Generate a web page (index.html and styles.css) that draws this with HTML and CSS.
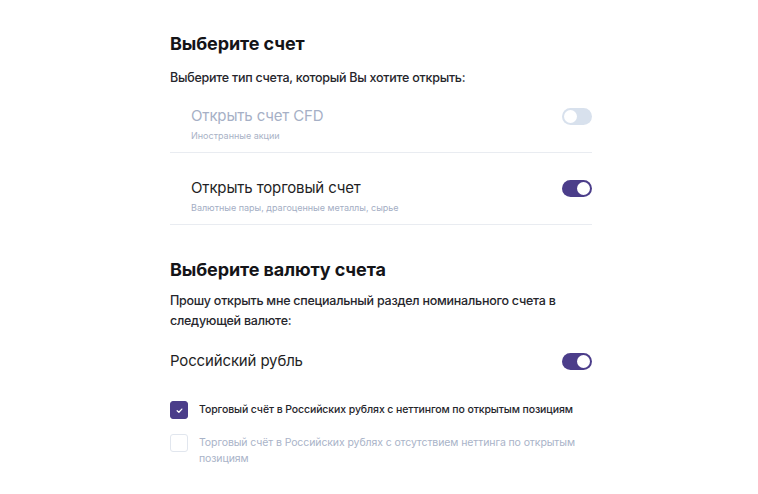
FILE: index.html
```html
<!DOCTYPE html>
<html lang="ru">
<head>
<meta charset="utf-8">
<title>Выберите счет</title>
<link rel="stylesheet" href="styles.css">
</head>
<body>
<main class="form">
  <section class="block">
    <h2 class="title">Выберите счет</h2>
    <p class="lead">Выберите тип счета, который Вы хотите открыть:</p>
    <div class="options">
      <div class="option is-off">
        <div class="option-head">
          <span class="option-name">Открыть счет CFD</span>
          <span class="toggle"><span class="knob"></span></span>
        </div>
        <div class="option-sub">Иностранные акции</div>
      </div>
      <div class="option">
        <div class="option-head">
          <span class="option-name">Открыть торговый счет</span>
          <span class="toggle on"><span class="knob"></span></span>
        </div>
        <div class="option-sub">Валютные пары, драгоценные металлы, сырье</div>
      </div>
    </div>
  </section>

  <section class="block second">
    <h2 class="title">Выберите валюту счета</h2>
    <p class="lead para">Прошу открыть мне специальный раздел номинального счета в следующей валюте:</p>
    <div class="currency">
      <span class="currency-name">Российский рубль</span>
      <span class="toggle on"><span class="knob"></span></span>
    </div>
    <div class="checks">
      <label class="check">
        <span class="box checked">
          <svg viewBox="0 0 10 10" width="9" height="9"><path d="M2.4 5.2 L4.3 6.9 L7.6 3.4" fill="none" stroke="#fff" stroke-width="1.4" stroke-linecap="round" stroke-linejoin="round"/></svg>
        </span>
        <span class="check-text">Торговый счёт в Российских рублях с неттингом по открытым позициям</span>
      </label>
      <label class="check muted">
        <span class="box"></span>
        <span class="check-text">Торговый счёт в Российских рублях с отсутствием неттинга по открытым позициям</span>
      </label>
    </div>
  </section>
</main>
</body>
</html>
```

FILE: styles.css
```css
* { box-sizing: border-box; }
html, body { margin: 0; padding: 0; background: #fff; }
body {
  font-family: Inter, "Noto Sans", "DejaVu Sans", sans-serif;
  color: #1c1c22;
  -webkit-font-smoothing: antialiased;
}
.form {
  width: 422px;
  margin-left: 170px;
  padding-top: 32px;
}
.title {
  margin: 0;
  font-size: 18px;
  line-height: 24px;
  font-weight: 700;
  color: #141418;
  letter-spacing: -0.1px;
}
.lead {
  margin: 12px 0 0;
  font-size: 12.5px;
  line-height: 20px;
  font-weight: 500;
  letter-spacing: -0.25px;
  color: #26262c;
}
.options { display: flex; flex-direction: column; }
.option {
  padding: 25px 0 9px 21px;
  border-bottom: 1px solid #e9ecf1;
}
.option:first-child { padding-top: 18px; }
.option-head {
  display: flex;
  align-items: center;
  justify-content: space-between;
  height: 20px;
}
.option-name {
  font-size: 15px;
  line-height: 20px;
  font-weight: 400;
  letter-spacing: -0.15px;
  color: #1f1f25;
}
.option-sub {
  margin-top: 3px;
  font-size: 9px;
  line-height: 14px;
  color: #a4aec4;
}
.is-off .option-name { color: #a6b0c6; }
.is-off .option-sub { color: #a9b2c6; }

.toggle {
  position: relative;
  width: 30px;
  height: 17px;
  border-radius: 9px;
  background: #d8e1ed;
  flex: none;
}
.toggle .knob {
  position: absolute;
  top: 2px;
  left: 2px;
  width: 13px;
  height: 13px;
  border-radius: 50%;
  background: #fff;
}
.toggle.on { background: #4b3d8a; }
.toggle.on .knob { left: 15px; }

.second { margin-top: 33px; }
.para { margin-top: 9px; }
.currency {
  margin-top: 20px;
  display: flex;
  align-items: center;
  justify-content: space-between;
  height: 20px;
}
.currency-name {
  font-size: 15px;
  line-height: 20px;
  letter-spacing: -0.15px;
  color: #1f1f25;
}
.checks {
  margin-top: 30px;
  display: flex;
  flex-direction: column;
  gap: 15px;
}
.check {
  display: flex;
  align-items: flex-start;
  gap: 11px;
}
.box {
  width: 18px;
  height: 18px;
  flex: none;
  border-radius: 3px;
  border: 1px solid #e1e6ee;
  background: #fff;
  display: flex;
  align-items: center;
  justify-content: center;
}
.box.checked {
  background: #4b3d8a;
  border-color: #4b3d8a;
}
.check-text {
  font-size: 10.5px;
  line-height: 16px;
  font-weight: 500;
  letter-spacing: -0.1px;
  color: #25252b;
  padding-top: 1px;
}
.check.muted .check-text { color: #a9b3c8; font-weight: 400; }
```
